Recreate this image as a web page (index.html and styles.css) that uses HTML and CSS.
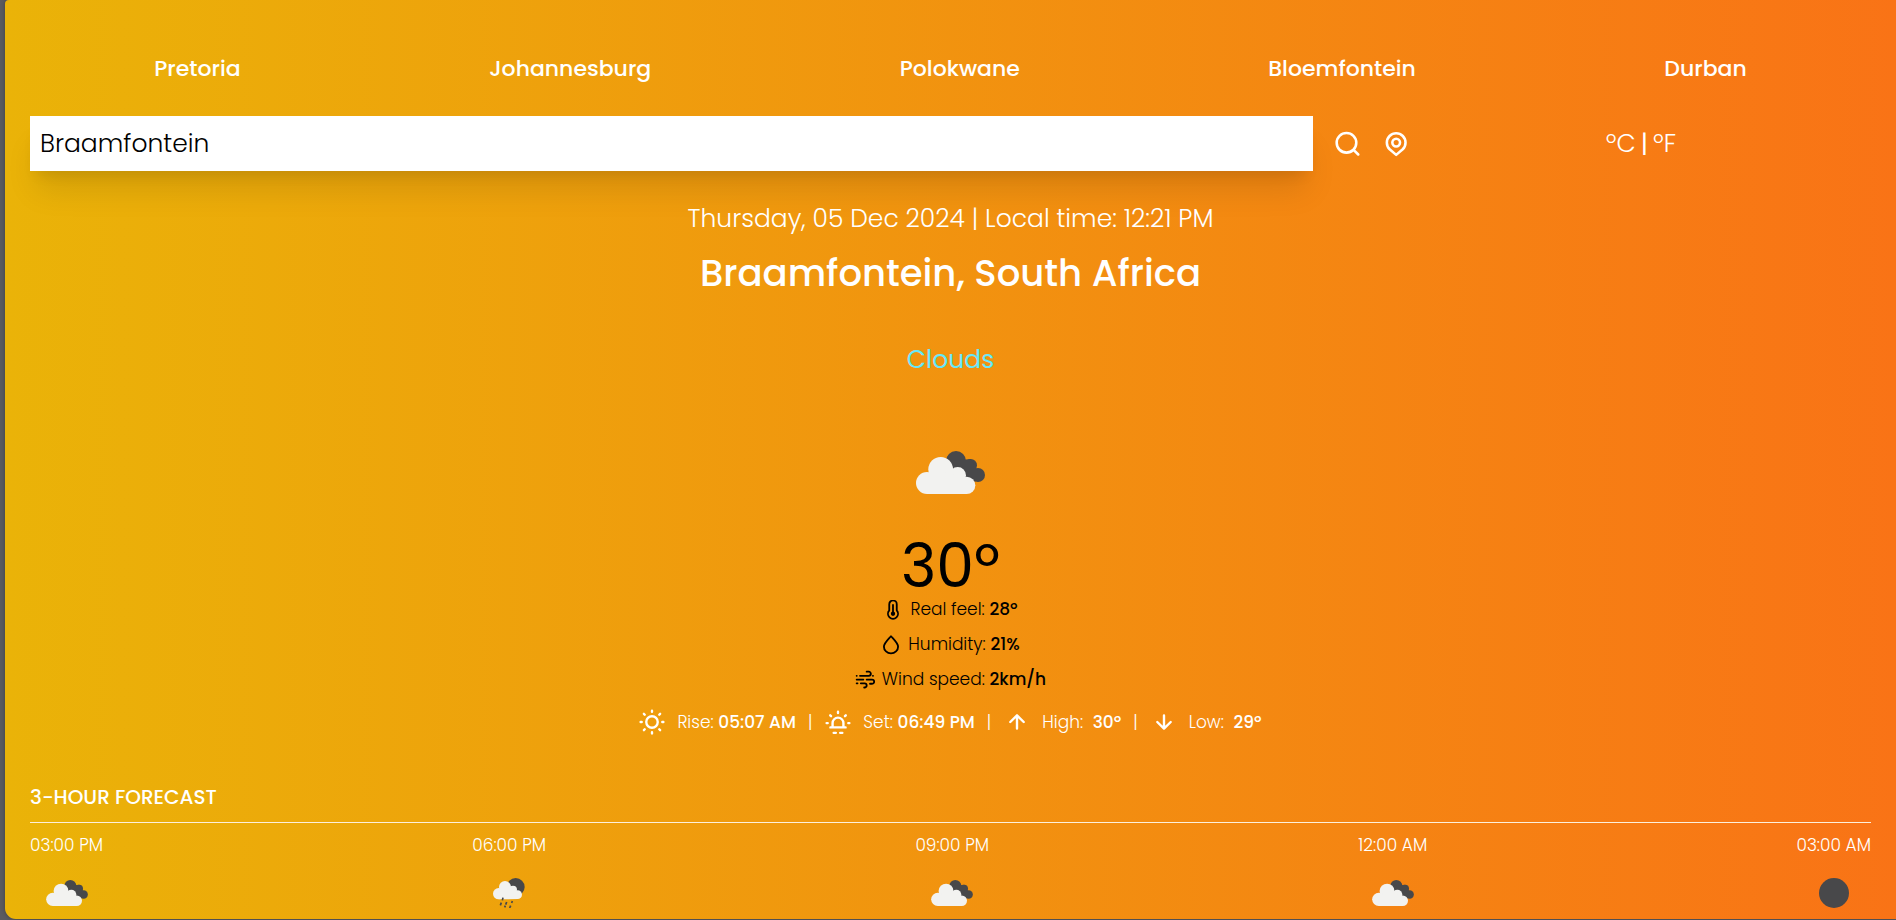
FILE: index.html
```
<!DOCTYPE html>
<html lang="en">
<head>
<meta charset="utf-8">
<meta name="viewport" content="width=device-width, initial-scale=1">
<title>Weather</title>
<link rel="stylesheet" href="styles.css">
</head>
<body>
<svg class="sprite" aria-hidden="true">
  <symbol id="clouds" viewBox="0 0 207 129">
    <g fill="#48484a"><circle cx="120" cy="30" r="30"/><circle cx="164" cy="43" r="19"/><circle cx="186" cy="72" r="21"/><path d="M104 30L164 24L186 60L178 92L120 80Z"/></g>
    <g fill="#f2f2f0"><circle cx="33" cy="96" r="33"/><circle cx="74" cy="55" r="37"/><circle cx="125" cy="73" r="25"/><circle cx="152" cy="103" r="26"/><path d="M33 129V90L60 60L125 73L152 90V129Z"/></g>
  </symbol>
  <symbol id="rain" viewBox="0 0 96 90">
    <circle cx="68" cy="27" r="27" fill="#48484a"/>
    <g fill="#f2f2f0"><circle cx="17" cy="47" r="17"/><circle cx="36" cy="27" r="18"/><circle cx="60" cy="35" r="12"/><circle cx="74" cy="50" r="13"/><path d="M17 64V44L36 27L60 35L74 50V63Z"/></g>
    <path d="M30 59l-2 8M25 74l-3 8M41 72l-3 8M58 69l-2 6M37 83l-2 5M53 83l-3 7" fill="none" stroke="#48484a" stroke-width="5"/>
  </symbol>
  <symbol id="moon" viewBox="0 0 30 30"><circle cx="15" cy="15" r="15" fill="#48484a"/></symbol>
</svg>

<main class="card">
  <nav class="cities">
    <button type="button">Pretoria</button>
    <button type="button">Johannesburg</button>
    <button type="button">Polokwane</button>
    <button type="button">Bloemfontein</button>
    <button type="button">Durban</button>
  </nav>

  <div class="controls">
    <form class="search">
      <input type="text" value="Braamfontein" aria-label="Search for a city">
      <button type="button" aria-label="Search">
        <svg class="line" viewBox="0 0 24 24"><circle cx="10.700" cy="11" r="8.400"/><path d="M16.800 17L20.800 21"/></svg>
      </button>
      <button type="button" aria-label="Use my location">
        <svg class="line" viewBox="0 0 24 24"><circle cx="11.300" cy="10.800" r="3.300"/><path d="M11.300 21.300L5.700 16.500a8 8 0 1 1 11.200 0Z"/></svg>
      </button>
    </form>
    <div class="units">
      <button type="button">ºC</button><span>|</span><button type="button">ºF</button>
    </div>
  </div>

  <p class="date">Thursday, 05 Dec 2024 | Local time: 12:21 PM</p>
  <h1 class="place">Braamfontein, South Africa</h1>
  <p class="condition">Clouds</p>
  <div class="picture"><svg><use href="#clouds"/></svg></div>
  <p class="temp">30º</p>

  <ul class="details">
    <li>
      <svg class="line" viewBox="0 0 24 24"><path d="M7.500 12.500V5a4.500 4.500 0 0 1 9 0v7.500a6 6 0 1 1-9 0Z"/><path d="M12 6v11"/><circle cx="12" cy="16.500" r="1.500"/></svg>
      <span>Real feel: <b>28º</b></span>
    </li>
    <li>
      <svg class="line" viewBox="0 0 24 24"><path d="M12 1.500C8 6 3.500 10 3.500 14a8.500 8 0 0 0 17 0C20.500 10 16 6 12 1.500Z"/></svg>
      <span>Humidity: <b>21%</b></span>
    </li>
    <li>
      <svg class="line" viewBox="0 0 24 24"><path d="M6 7h10.500a2.500 2.500 0 0 0 0-5H14M2 7h.1M2 16h1M7 16h4.500a2.500 2.500 0 0 1 0 5H11M2 11.500h8M14 11.500h6.500a2.500 2.500 0 0 1 0 5H18M21.500 7h.1"/></svg>
      <span>Wind speed: <b>2km/h</b></span>
    </li>
  </ul>

  <div class="sun">
    <svg class="line" viewBox="0 0 24 24"><circle cx="12" cy="12" r="5.300"/><path d="M12 1.500v1M12 21.500v1M1.500 12h1M21.500 12h1M4.500 4.500l.8.800M18.700 18.700l.8.800M4.500 19.500l.8-.8M18.700 5.300l.8-.8"/></svg>
    <span class="label">Rise: <b>05:07 AM</b></span>
    <span class="bar">|</span>
    <svg class="line" viewBox="0 0 24 24"><path d="M5 17h14M7 17v-4a5 5 0 0 1 10 0v4M12 2.500v1.200M1.500 13h1M21.500 13h1M4.800 5.800l.8.800M18.400 6.600l.8-.8M8 22h2M14 22h2"/></svg>
    <span class="label">Set: <b>06:49 PM</b></span>
    <span class="bar">|</span>
    <svg class="line" viewBox="0 0 24 24"><path d="M12 18V6M5.800 12L12 5.800L18.200 12"/></svg>
    <span class="label wide">High: <b>30º</b></span>
    <span class="bar">|</span>
    <svg class="line" viewBox="0 0 24 24"><path d="M12 6v12M5.800 12L12 18.200L18.200 12"/></svg>
    <span class="label wide">Low: <b>29º</b></span>
  </div>

  <section class="forecast">
    <h2>3-HOUR FORECAST</h2>
    <hr>
    <ul class="hours">
      <li><span>03:00 PM</span><svg><use href="#clouds"/></svg></li>
      <li><span>06:00 PM</span><svg class="tall"><use href="#rain"/></svg></li>
      <li><span>09:00 PM</span><svg><use href="#clouds"/></svg></li>
      <li><span>12:00 AM</span><svg><use href="#clouds"/></svg></li>
      <li><span>03:00 AM</span><svg class="tall"><use href="#moon"/></svg></li>
    </ul>
  </section>
</main>
</body>
</html>
```
FILE: styles.css
```
* { box-sizing: border-box; margin: 0; padding: 0; }

body {
  min-height: 100vh;
  padding: 0 0 1px 5px;
  background: #5b5b60;
  color: #fff;
  font: 300 17px/27px Poppins, Inter, sans-serif;
}

button {
  border: 0;
  background: none;
  color: inherit;
  font: inherit;
  cursor: pointer;
}

b { font-weight: 500; }
ul { list-style: none; }

.sprite { position: absolute; width: 0; height: 0; }

.line {
  display: block;
  fill: none;
  stroke: currentColor;
  stroke-width: 2.2;
  stroke-linecap: round;
  stroke-linejoin: round;
}

.card {
  min-height: calc(100vh - 1px);
  padding: 53px 25px 0;
  border-radius: 4px 0 0 11px;
  background: linear-gradient(to right, #eab308, #f97316);
  box-shadow: 0 0 4px rgba(0, 0, 0, .3);
}

.cities {
  display: flex;
  justify-content: space-around;
  font-size: 22px;
  line-height: 32px;
}
.cities button { font-weight: 500; }

.controls { display: flex; margin-top: 31px; }

.search { display: flex; flex: 3; align-items: center; gap: 21px; }
.search input {
  flex: 1;
  min-width: 0;
  height: 55px;
  padding: 0 10px;
  border: 0;
  outline: 0;
  background: #fff;
  color: #000;
  font: 300 25px/36px Poppins, Inter, sans-serif;
  box-shadow: 0 25px 31px -6px rgba(0, 0, 0, .1), 0 10px 13px -7px rgba(0, 0, 0, .1);
}
.search svg { width: 28px; height: 28px; }

.units {
  display: flex;
  flex: 1;
  align-items: center;
  justify-content: center;
  gap: 5px;
  font-size: 25px;
}
.units span { font-weight: 400; }

.date {
  margin-top: 31px;
  font-size: 25px;
  line-height: 34px;
  text-align: center;
}

.place {
  margin-top: 17px;
  font-size: 37px;
  font-weight: 500;
  line-height: 40px;
  text-align: center;
}

.condition {
  margin-top: 51px;
  color: #67e8f9;
  font-size: 25px;
  font-weight: 400;
  line-height: 32px;
  text-align: center;
}

.picture {
  display: flex;
  align-items: center;
  justify-content: center;
  height: 110px;
  margin-top: 41px;
}
.picture svg { width: 69px; height: 43px; }

.temp {
  margin-top: 9px;
  color: #000;
  font-size: 60px;
  font-weight: 400;
  line-height: 60px;
  text-align: center;
}

.details { display: grid; gap: 8px; color: #000; }
.details li {
  display: flex;
  align-items: center;
  justify-content: center;
  gap: 7px;
}
.details svg { width: 20px; height: 20px; }

.sun {
  display: flex;
  align-items: center;
  justify-content: center;
  margin-top: 15px;
  line-height: 28px;
}
.sun svg { width: 26px; height: 26px; }
.label { margin: 0 12px; }
.label:last-child { margin-right: 0; }
.wide b { margin-left: 5px; }
.bar { margin-right: 13px; }

.forecast { margin-top: 47px; }
.forecast h2 { font-size: 20px; font-weight: 500; line-height: 28px; }
.forecast hr { margin: 11px 0 9px; border: 0; border-top: 1px solid #fdf0dc; }

.hours { display: flex; justify-content: space-between; }
.hours li {
  display: grid;
  grid-template-rows: 27px 53px;
  row-gap: 7px;
  align-items: center;
  justify-items: center;
}
.hours svg { width: 42px; height: 26px; }
.hours .tall { width: 32px; height: 30px; }
```
